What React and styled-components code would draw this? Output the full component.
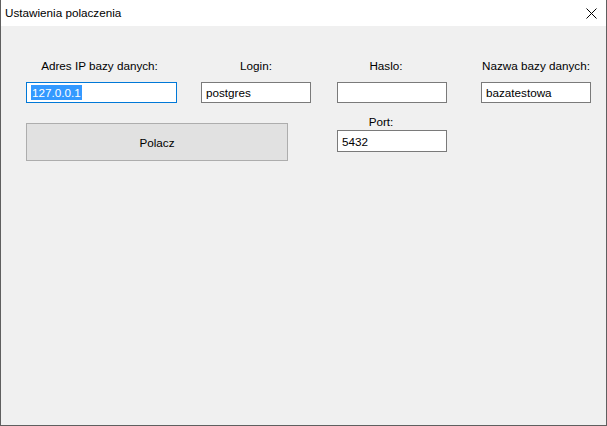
import React from 'react';
import styled, {createGlobalStyle} from 'styled-components';

const Global = createGlobalStyle`
  html, body {
    margin:0;
    padding:0;
    background:#f0f0f0;
  }
  * {
    box-sizing:border-box;
  }
`

const Window = styled.div`
  width:607px;
  height:426px;
  display:flex;
  flex-direction:column;
  background:#f0f0f0;
  border-left:1px solid #5f5f5f;
  border-right:1px solid #5f5f5f;
  border-bottom:1px solid #5f5f5f;
  font-family:"Segoe UI", "Liberation Sans", Arial, sans-serif;
  font-size:11.7px;
  color:#000;
`

const TitleBar = styled.div`
  height:26px;
  background:#fff;
  display:flex;
  align-items:center;
  justify-content:space-between;
  padding-left:4px;
`

const Title = styled.div`
  line-height:14px;
  padding-bottom:1px;
`

const CloseButton = styled.div`
  width:30px;
  height:26px;
  display:flex;
  align-items:center;
  justify-content:center;
`

const Content = styled.div`
  display:flex;
  flex-direction:column;
  padding:33px 0 0 25px;
`

const Row = styled.div`
  display:flex;
  align-items:flex-start;
  margin-top:${props => props.$top || 0}px;
`

const Column = styled.div`
  display:flex;
  flex-direction:column;
  width:${props => props.$width}px;
  margin-left:${props => props.$gap || 0}px;
`

const Label = styled.div`
  line-height:14px;
  height:14px;
  text-align:center;
  white-space:nowrap;
  padding-right:${props => props.$shift || 0}px;
  margin-bottom:${props => props.$space}px;
`

const TextBox = styled.div`
  height:${props => props.$height || 21}px;
  display:flex;
  align-items:center;
  padding-left:4px;
  background:#fff;
  border:1px solid ${props => props.$focused ? '#0078d7' : '#7a7a7a'};
  white-space:nowrap;
  overflow:hidden;
`

const Selected = styled.span`
  background:#3399ff;
  color:#fff;
  line-height:15px;
  padding:0 1px;
`

const Button = styled.div`
  width:262px;
  height:38px;
  margin-top:8px;
  display:flex;
  align-items:center;
  justify-content:center;
  background:#e1e1e1;
  border:1px solid #adadad;
`

const CloseIcon = () => (
  <svg width="11" height="11" viewBox="0 0 11 11">
    <path d="M0.5 0.5 L10.5 10.5 M10.5 0.5 L0.5 10.5" stroke="#000" strokeWidth="1" fill="none" />
  </svg>
)

const fields = [
  {label:'Adres IP bazy danych:', width:151, gap:0, shift:4, value:'127.0.0.1', focused:true},
  {label:'Login:', width:110, gap:24, shift:0, value:'postgres'},
  {label:'Haslo:', width:110, gap:26, shift:12, value:''},
  {label:'Nazwa bazy danych:', width:110, gap:34, shift:0, value:'bazatestowa'},
]

const App = () => {
  return (
    <Window>
      <Global/>
      <TitleBar>
        <Title>Ustawienia polaczenia</Title>
        <CloseButton><CloseIcon/></CloseButton>
      </TitleBar>
      <Content>
        <Row>
          {fields.map((f, index) => (
            <Column key={index} $width={f.width} $gap={f.gap}>
              <Label $shift={f.shift} $space={9}>{f.label}</Label>
              <TextBox $focused={f.focused}>
                {f.focused ? <Selected>{f.value}</Selected> : f.value}
              </TextBox>
            </Column>
          ))}
        </Row>
        <Row $top={12}>
          <Button>Polacz</Button>
          <Column $width={110} $gap={49}>
            <Label $shift={22} $space={1}>Port:</Label>
            <TextBox $height={22}>5432</TextBox>
          </Column>
        </Row>
      </Content>
    </Window>
  )
}

export default App;
